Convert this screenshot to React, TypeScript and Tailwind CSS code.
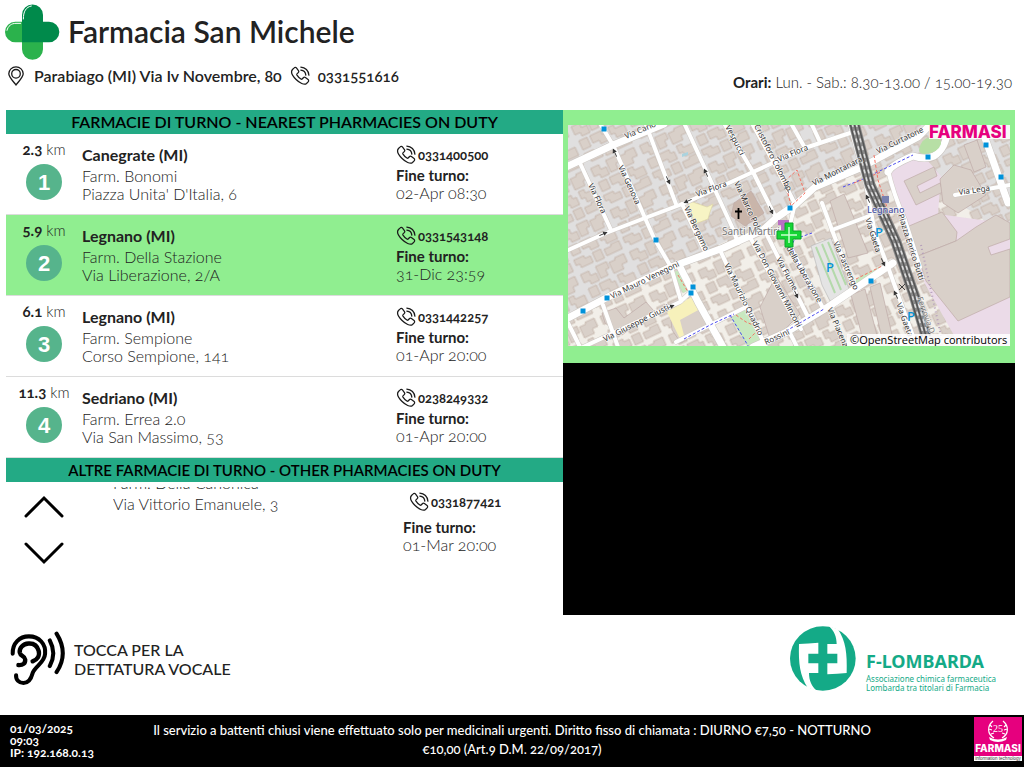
const pharmacies = [
  { km: "2.3", town: "Canegrate (MI)", name: "Farm. Bonomi", street: "Piazza Unita' D'Italia, 6", phone: "0331400500", end: "02-Apr 08:30", active: false },
  { km: "5.9", town: "Legnano (MI)", name: "Farm. Della Stazione", street: "Via Liberazione, 2/A", phone: "0331543148", end: "31-Dic 23:59", active: true },
  { km: "6.1", town: "Legnano (MI)", name: "Farm. Sempione", street: "Corso Sempione, 141", phone: "0331442257", end: "01-Apr 20:00", active: false },
  { km: "11.3", town: "Sedriano (MI)", name: "Farm. Errea 2.0", street: "Via San Massimo, 53", phone: "0238249332", end: "01-Apr 20:00", active: false },
];

const wideRoads = [
  "M-2 42 L45 20 L96 -1",
  "M-2 194 L38 173 L103 142 L155 123 L195 105 L208 93 L227 80 L247 62 L292 43 L350 12 L364 -2",
  "M112 142 L130 177 L155 222",
  "M185 222 L217 208 L260 182 L325 138",
  "M320 47 Q323 40 345 31 Q357 35 366 31 Q378 24 380 3",
  "M417 13 L440 78",
];

const roads = [
  "M33 0 L45 20 L77 93 L86 113 L103 142 L113 176",
  "M12 38 L43 105",
  "M-2 126 L38 108 L77 93 L117 78 L185 47 L237 23 L285 7",
  "M78 0 L108 79",
  "M117 0 L165 104 L170 118",
  "M157 0 L185 47 L208 93",
  "M185 0 L206 38 L226 77",
  "M114 79 L136 125",
  "M224 0 L237 23",
  "M244 0 L252 17",
  "M282 0 L298 60 L307 108 L320 142 L346 214",
  "M320 45 Q325 68 337 95 L352 142",
  "M387 70 L442 60",
  "M108 217 L142 200 L178 182",
  "M15 222 L112 177 L125 165",
  "M35 180 L50 222",
  "M0 198 L12 222",
  "M152 125 L175 175 L198 222",
  "M182 112 L225 192 L233 204",
  "M198 108 L240 192",
  "M217 112 L256 185",
  "M227 78 L222 100",
  "M254 78 L264 105 L287 164",
  "M264 105 L301 91",
  "M222 208 L229 222",
];

const streetNames = [
  { x: 58, y: 14, r: -23, text: "Via Carlo C" },
  { x: 50, y: 42, r: 65, text: "Via Genova" },
  { x: 20, y: 60, r: 65, text: "Via Flora" },
  { x: 129, y: 72, r: -20, text: "Via Flora" },
  { x: 211, y: 37, r: -23, text: "Via Flora" },
  { x: 157, y: 2, r: 62, text: "Vespucci" },
  { x: 186, y: 1, r: 63, text: "Cristoforo Colombo" },
  { x: 166, y: 58, r: 65, text: "Via Marco Polo" },
  { x: 116, y: 83, r: 65, text: "Via Bergamo" },
  { x: 246, y: 61, r: -27, text: "Via Montanara" },
  { x: 310, y: 29, r: -26, text: "Via Curtatone" },
  { x: 391, y: 70, r: -8, text: "Via Lega" },
  { x: 44, y: 174, r: -26, text: "Via Mauro Venegoni" },
  { x: 37, y: 217, r: -27, text: "Via Giuseppe Giusti" },
  { x: 156, y: 140, r: 64, text: "Via Maurizio Quadrio" },
  { x: 184, y: 118, r: 62, text: "Via Don Giovanni Minzoni" },
  { x: 208, y: 134, r: 62, text: "Via Fiume" },
  { x: 218, y: 123, r: 60, text: "della Liberazione" },
  { x: 265, y: 118, r: 66, text: "Via Pastrengo" },
  { x: 259, y: 184, r: 67, text: "Via Piacenza" },
  { x: 297, y: 94, r: 72, text: "Via Gaeta" },
  { x: 328, y: 179, r: 70, text: "Via Gaeta" },
  { x: 330, y: 90, r: 72, text: "Piazza Enrico Butti" },
  { x: 198, y: 220, r: -25, text: "Rossini" },
];

const busStops = [
  [36, 4], [88, 115], [222, 83], [360, 32], [418, 20], [433, 52],
  [15, 186], [39, 173], [125, 162], [123, 168], [303, 156],
];

const arrows = [
  { x: 47, y: 28, r: 245 },
  { x: 100, y: 55, r: 65 },
  { x: 138, y: 48, r: 245 },
  { x: 120, y: 76, r: 155 },
  { x: 35, y: 109, r: -24 },
  { x: 203, y: 85, r: 65 },
  { x: 219, y: 64, r: 245 },
  { x: 102, y: 182, r: -24 },
  { x: 228, y: 169, r: 65 },
  { x: 300, y: 74, r: 245 },
  { x: 315, y: 137, r: 65 },
  { x: 328, y: 170, r: 245 },
];

function PhoneIcon({ className }: { className: string }) {
  return (
    <svg className={className} viewBox="0 0 24 24" fill="none" stroke="#1a1a1a" strokeWidth={1.5} strokeLinecap="round" strokeLinejoin="round" aria-hidden="true">
      <path d="M3 4.2 5 2.2a1.8 1.8 0 0 1 2.7.1l2.4 3.2a1.9 1.9 0 0 1-.2 2.500L8.400 9.400c-.5.6-.3 1 0 1.500 1.200 1.900 2.800 3.500 4.700 4.700.5.4 1 .4 1.500 0L16 14.100a1.900 1.900 0 0 1 2.500-.2l3.200 2.400a1.800 1.800 0 0 1 .1 2.700l-2 2c-2.600 2.400-8.400-.7-12.800-5.100S.8 6.800 3 4.200z" />
      <path d="M13 1.300c5.300.3 9.400 4.400 9.700 9.700M13 5c3.300.3 5.700 2.700 6 6" />
    </svg>
  );
}

function PinIcon() {
  return (
    <svg className="h-5 w-4" viewBox="0 0 16 20" fill="none" stroke="#1a1a1a" strokeWidth={1.3} aria-hidden="true">
      <path d="M8 19C6 16 .8 11.500.8 7.800A7.200 7 0 0 1 15.200 7.800C15.200 11.500 10 16 8 19z" />
      <circle cx="8" cy="7.800" r="4.300" />
    </svg>
  );
}

function PharmacyLogo() {
  return (
    <svg className="size-14" viewBox="12 13 168 168" aria-hidden="true">
      <path d="M66 66H46a31 31 0 0 0 0 62h20v21a31 31 0 0 0 63 0v-21L66 66z" fill="#2bb24c" />
      <path d="M66 128V46a31 31 0 0 1 63 0v20h18a31 31 0 0 1 0 62z" fill="#008a4b" />
      <path d="M70 58C70 35 78 22 94 19M21 92c3-13 13-21 27-21h14" fill="none" stroke="#fff" strokeWidth={3} strokeLinecap="round" />
    </svg>
  );
}

function EarIcon() {
  return (
    <svg className="size-14" viewBox="30 36 166 166" fill="none" stroke="#000" strokeWidth={12} strokeLinecap="round" aria-hidden="true">
      <path d="M38 103C37 72 58 52 86 52c31 0 51 23 48 52-2 27-29 35-37 57-5 19-13 29-27 29-13 0-23-9-22-23" />
      <path d="M97 126c14-5 22-17 18-31-4-15-15-23-30-22-17 1-28 13-26 27 2 12 15 9 16 20 1 12-7 18-20 17" strokeWidth={13} />
      <path d="M148 64c13 24 13 52 0 76M168 44c24 38 24 78 0 114" />
    </svg>
  );
}

function LombardaLogo() {
  const arm = "M42 70Q70 68 100 66V99H70V128H100V157H72C72 178 80 198 96 211L68 201C45 165 40 130 42 70z";
  return (
    <svg className="h-[65px] w-[66px]" viewBox="15 16 198 195" aria-hidden="true">
      <ellipse cx="113.500" cy="113.500" rx="98.500" ry="97" fill="#14aa87" />
      <path d={arm} fill="#fff" />
      <path d={arm} fill="#fff" transform="rotate(180 113.500 113.500)" />
    </svg>
  );
}

function CityMap() {
  return (
    <svg className="block w-full" viewBox="0 0 442 221" role="img" aria-label="Mappa">
      <defs>
        <pattern id="houses" width="54" height="46" patternUnits="userSpaceOnUse" patternTransform="rotate(-25)">
          <path
            d="M2 3h9v5h6v8H8v-4H2zM19 2h12v7h-4v6h-8zM33 4h7v-2h10v9h-6v5H33zM3 19h9v10H3zM15 19h12v4h4v8h-9v-4h-7zM35 19h6v4h10v9H39v-5h-4zM2 33h11v3h6v7H6v-4H2zM22 34h9v10h-9zM34 36h8v-2h9v9H34z"
            fill="#d9d0c9"
            stroke="#c0aea2"
            strokeWidth={0.7}
          />
        </pattern>
      </defs>
      <rect width="442" height="221" fill="#f2efe9" />
      <path d="M0 0H442V120L410 90 330 45 290 45 245 62 208 93 103 142 0 192z" fill="#e0dfdf" />
      <rect width="442" height="221" fill="url(#houses)" />

      {/* Industrial area */}
      <path d="M320 47l25-15 15 4 13 15-3 38 72 10v122h-50l-35-62-15-46z" fill="#ebdbe8" />
      <g fill="#d9d0c9" stroke="#bfaaa8" strokeWidth={0.7}>
        <path d="M336 56l30-14 3 9-20 10 3 7 20-10 3 9-27 13z" />
        <path d="M334 104l40-17 15 20-1 9-38 15-10-13z" />
        <path d="M350 131l38-15 20-14 20-12 14 8v16l-22 8 3 8 19-6v48l-52 24-32-40z" />
        <path d="M372 54l14-14 17 5 15 25-28 18-15-10z" />
        <path d="M396 20l13-5 9 27-12 5zM300 128l-15-37-9-22-14 7 18 57z" />
        <path d="M166 78l17-12 13 22-19 13-14-10z" fill="#c9b5aa" />
        <path d="M192 182l16-31 24 38-15 15-15 10z" />
        <path d="M34 188l14-5 8 10 22-16 8 9-32 24-17-12zM103 195l29-18 12 20-31 21-9-13z" />
        <path d="M283 170l14-6 15 58h-15zM302 162l10-4 14 60-10 4z" />
      </g>
      <path d="M119 75l20 7 6-3-3 8-2 7-13 5z" fill="#f7f4c4" stroke="#ddd6a5" strokeWidth={0.7} />
      <path d="M99 187l26-16 9 12-22 12 5 19h-5z" fill="#f7f1bb" />
      <path d="M105 147l9-2 11 18-10 5zM163 193l14-10 22 36-20 2zM288 154l25-13 4 4-29 16zM226 76l10-6 2 6-10 5z" fill="#c8e8bf" />
      <path d="M243 121l20-8 19 54-20 9-8-16z" fill="#e4e4e4" stroke="#bbb" strokeWidth={0.7} />
      <path d="M248 122l19 46M254 119l19 46M260 117l18 43" stroke="#b4d9ab" strokeWidth={2} />
      <path d="M114 29l6-2v3l-6 2z" fill="#aad3df" />

      {/* Roads */}
      <g fill="none" strokeLinecap="round" strokeLinejoin="round">
        {wideRoads.map((d) => (
          <path key={d} d={d} stroke="#c9c5c0" strokeWidth={8} />
        ))}
        {roads.map((d) => (
          <path key={d} d={d} stroke="#cfcac5" strokeWidth={5} />
        ))}
        {roads.map((d) => (
          <path key={d} d={d} stroke="#fff" strokeWidth={4} />
        ))}
        {wideRoads.map((d) => (
          <path key={d} d={d} stroke="#fff" strokeWidth={7} />
        ))}
      </g>
      <path d="M351 25q2-12 12-13 11 0 10 7-3 9-16 10-6 0-6-4z" fill="#b7dfa5" />
      <g fill="none" strokeWidth={1}>
        <path d="M275 62l20-8 50-24M241 164l-18-43 4-7 17-6M162 190l20 34M116 214l28-15 22-10M218 206l38-22" stroke="#4b4bf0" strokeDasharray="3 2" />
        <path d="M217 56l12-11 8 23-14 13zM286 58l27-11M306 30l4 25 25 76M168 190l10 7 14 6-12 12M110 150l10 17M288 154l26-13M301 37l-5 12" stroke="#f57264" strokeDasharray="3 2" />
        <path d="M353 120l22 100" stroke="#b49dba" strokeDasharray="1 3" strokeWidth={2} />
      </g>

      {/* Railway */}
      <path d="M286-2l16 62 26 57 18 53 12 41" fill="none" stroke="#8a8a8a" strokeWidth={11} />
      <path d="M282-2l16 62 26 57 18 53 12 41M286-2l16 62 26 57 18 53 12 41M290-2l16 62 26 57 18 53 12 41" fill="none" stroke="#555" strokeWidth={1.5} />
      <path d="M284-2l16 62 26 57 18 53 12 41M288-2l16 62 26 57 18 53 12 41" fill="none" stroke="#ddd" strokeWidth={1.5} strokeDasharray="4 4" />

      <g stroke="#333" strokeWidth={0.9} fill="#333">
        {arrows.map((a) => (
          <path key={`${a.x}-${a.y}`} d="M-4 0h5M1-1.500l3 1.500-3 1.500z" transform={`translate(${a.x} ${a.y}) rotate(${a.r})`} />
        ))}
      </g>
      <g fontFamily="Noto Sans, sans-serif" fontSize="8" fill="#333" stroke="#fff" strokeWidth={1.500} strokeOpacity={0.7} paintOrder="stroke">
        {streetNames.map((s) => (
          <text key={`${s.x}-${s.y}`} transform={`translate(${s.x} ${s.y}) rotate(${s.r})`}>
            {s.text}
          </text>
        ))}
        <text x="154" y="110" fontSize="10" fill="#777">Santi Martiri</text>
        <text x="299" y="88" fontSize="9" fontWeight="500" fill="#4b55a5">Legnano</text>
        <text transform="translate(349 173) rotate(70)" fill="#777">Ferrovia D</text>
      </g>
      <g fontFamily="Noto Sans, sans-serif" fontSize="13" fontWeight="500" fill="#0092da">
        <text x="307" y="112">P</text>
        <text x="258" y="147">P</text>
        <text x="339" y="196">P</text>
      </g>
      <g fill="#0092da">
        {busStops.map(([x, y]) => (
          <rect key={`${x}-${y}`} x={x - 2.5} y={y - 2.5} width="5" height="5" />
        ))}
      </g>
      <rect x="314" y="71" width="7" height="7" fill="#7981b0" />
      <path d="M170.500 83v11M167 86.500h7" stroke="#000" strokeWidth={1.800} />
      <path d="M331 159l6 6M337 159l-6 6" stroke="#444" />
      <path d="M210 95h11v5h-4v5h-4v-5h-3z" fill="#b86fc4" />

      {/* Selected pharmacy */}
      <path d="M217 98h8v8h8v8h-8v8h-8v-8h-8v-8h8z" fill="#16d435" stroke="#0aa52a" strokeWidth={1} />
      <path d="M221 102v16M213 110h16" stroke="#c9ffd0" strokeWidth={1.500} />

      <rect x="361" width="81" height="14" fill="#fff" fillOpacity={0.85} />
      <text x="361" y="13" fontFamily="Inter, sans-serif" fontWeight="800" fontSize="17" fill="#e6007e">FARMASI</text>
      <rect x="279" y="209" width="163" height="12" fill="#fff" fillOpacity={0.85} />
      <text x="282" y="219" fontFamily="Open Sans, sans-serif" fontSize="11" fill="#000">©OpenStreetMap contributors</text>
    </svg>
  );
}

function ChevronButton({ label, d }: { label: string; d: string }) {
  return (
    <button type="button" aria-label={label} className="block">
      <svg className="h-6 w-10" viewBox="0 0 40 24" fill="none" stroke="#000" strokeWidth={3} strokeLinecap="round">
        <path d={d} />
      </svg>
    </button>
  );
}

export default function App() {
  return (
    <div className="flex min-h-screen flex-col bg-white font-['Lato',sans-serif] text-[#222] oldstyle-nums">
      <header className="flex h-[110px] items-end justify-between pr-3 pl-1">
        <div className="self-start">
          <div className="flex items-center gap-2 pt-1">
            <PharmacyLogo />
            <h1 className="pb-0.5 text-[30px] leading-10 font-semibold">Farmacia San Michele</h1>
          </div>
          <div className="flex items-center pt-1 pl-1 text-base leading-6 font-semibold">
            <PinIcon />
            <span className="pl-2.5">Parabiago (MI) Via Iv Novembre, 80</span>
            <PhoneIcon className="ml-2 size-5" />
            <span className="pl-2 text-[15px]">0331551616</span>
          </div>
        </div>
        <p className="pb-4 text-[15px] leading-6 font-light">
          <strong className="font-bold">Orari:</strong> Lun. - Sab.: 8.30-13.00 / 15.00-19.30
        </p>
      </header>

      <main className="grid grid-cols-[557fr_452fr] pr-[9px] pl-1.5">
        <section>
          <h2 className="bg-[#23aa85] text-center text-base leading-6 font-semibold text-black">
            FARMACIE DI TURNO - NEAREST PHARMACIES ON DUTY
          </h2>
          <ul>
            {pharmacies.map((p, i) => (
              <li
                key={p.phone}
                className={`flex h-[81px] border-b border-[#dcdcdc] ${p.active ? "bg-[#90ee90]" : "bg-white"}`}
              >
                <div className="flex w-[76px] flex-col items-center pt-[5px]">
                  <p className="text-[15px] leading-5 font-light">
                    <b className="font-bold">{p.km}</b> km
                  </p>
                  <span className="mt-[5px] flex size-9 items-center justify-center rounded-full bg-[#56b48c] font-['Liberation_Sans',sans-serif] text-[22px] font-bold text-white">
                    {i + 1}
                  </span>
                </div>
                <div className="flex-1 pt-[11px] text-base leading-[18px] font-light">
                  <p className="pb-0.5 leading-5 font-bold">{p.town}</p>
                  <p>{p.name}</p>
                  <p>{p.street}</p>
                </div>
                <div className="w-[167px] pt-[11px] text-base leading-[18px] font-light">
                  <p className="flex items-center gap-0.5 pb-px text-[13px] leading-5 font-bold">
                    <PhoneIcon className="size-5" />
                    {p.phone}
                  </p>
                  <p className="text-[15px] font-bold">Fine turno:</p>
                  <p>{p.end}</p>
                </div>
              </li>
            ))}
          </ul>
          <h2 className="bg-[#23aa85] text-center text-[15px] leading-6 font-semibold text-black">
            ALTRE FARMACIE DI TURNO - OTHER PHARMACIES ON DUTY
          </h2>
          <div className="flex h-[133px]">
            <div className="flex w-[107px] flex-col gap-6 pt-3 pl-[18px]">
              <ChevronButton label="Su" d="M2 22 20 4 38 22" />
              <ChevronButton label="Giù" d="M2 2 20 20 38 2" />
            </div>
            <div className="mt-[5px] flex h-[72px] flex-1 flex-col justify-end overflow-hidden">
              <div className="flex items-end">
                <div className="flex-1 pb-[46px] text-base leading-[18px] font-light">
                  <p className="pb-[3px]">Farm. Della Canonica</p>
                  <p>Via Vittorio Emanuele, 3</p>
                </div>
                <div className="w-40 pb-[5px] text-base leading-[18px] font-light">
                  <p className="flex items-center gap-0.5 pb-1.5 pl-1.5 text-[13px] leading-5 font-bold">
                    <PhoneIcon className="size-5" />
                    0331877421
                  </p>
                  <p className="text-[15px] font-bold">Fine turno:</p>
                  <p>01-Mar 20:00</p>
                </div>
              </div>
            </div>
          </div>
        </section>

        <section className="flex flex-col">
          <div className="bg-[#90ee90] px-[5px] pt-[15px] pb-[17px]">
            <CityMap />
          </div>
          <div className="flex-1 bg-black" />
        </section>
      </main>

      <div className="flex flex-1 items-start justify-between pt-2.5 pr-[29px] pb-5 pl-2.5">
        <button type="button" className="flex items-center gap-2 pt-1.5 text-left text-base leading-[19px] font-medium">
          <EarIcon />
          <span>
            TOCCA PER LA
            <br />
            DETTATURA VOCALE
          </span>
        </button>
        <div className="flex items-center gap-2.5 font-['Noto_Sans',sans-serif] text-[#14aa87]">
          <LombardaLogo />
          <div className="w-[129px] pt-6 whitespace-nowrap">
            <p className="text-lg leading-6 font-bold">F-LOMBARDA</p>
            <p className="pt-px text-[8px] leading-[9px]">
              Associazione chimica farmaceutica
              <br />
              Lombarda tra titolari di Farmacia
            </p>
          </div>
        </div>
      </div>

      <footer className="mb-px flex h-[52px] items-start bg-black pr-0.5 pl-2.5 text-white">
        <div className="w-[140px] pt-2 text-xs leading-3 font-bold">
          <p>01/03/2025</p>
          <p>09:03</p>
          <p>IP: 192.168.0.13</p>
        </div>
        <p className="flex-1 pt-1.5 text-center text-[13px] leading-[19px] font-medium">
          Il servizio a battenti chiusi viene effettuato solo per medicinali urgenti. Diritto fisso di chiamata : DIURNO €7,50 - NOTTURNO
          <br />
          €10,00 (Art.9 D.M. 22/09/2017)
        </p>
        <div className="flex w-[148px] justify-end pt-0.5">
          <svg className="h-11 w-12" viewBox="0 0 48 44" role="img" aria-label="Farmasi">
            <rect width="48" height="44" fill="#e6007e" />
            <path d="M19 4c-6 5-6 13 1 17M29 4c6 5 6 13-1 17M16 8l2 2M15 12l3 1M17 17l3-1M32 8l-2 2M33 12l-3 1M31 17l-3-1" fill="none" stroke="#fff" strokeWidth={1.2} />
            <path d="M15 20q9 5 18 0l-1 3q-8 4-16 0z" fill="#fff" />
            <text x="24" y="15" textAnchor="middle" fontFamily="Liberation Serif, serif" fontSize="10" fill="#fff">25</text>
            <text x="24" y="35" textAnchor="middle" fontFamily="Inter, sans-serif" fontWeight="800" fontSize="10" fill="#fff">FARMASI</text>
            <rect y="39" width="48" height="5" fill="#fff" />
            <text x="24" y="43" textAnchor="middle" fontFamily="Liberation Sans, sans-serif" fontSize="4.5" fill="#333">information technology</text>
          </svg>
        </div>
      </footer>
    </div>
  );
}
